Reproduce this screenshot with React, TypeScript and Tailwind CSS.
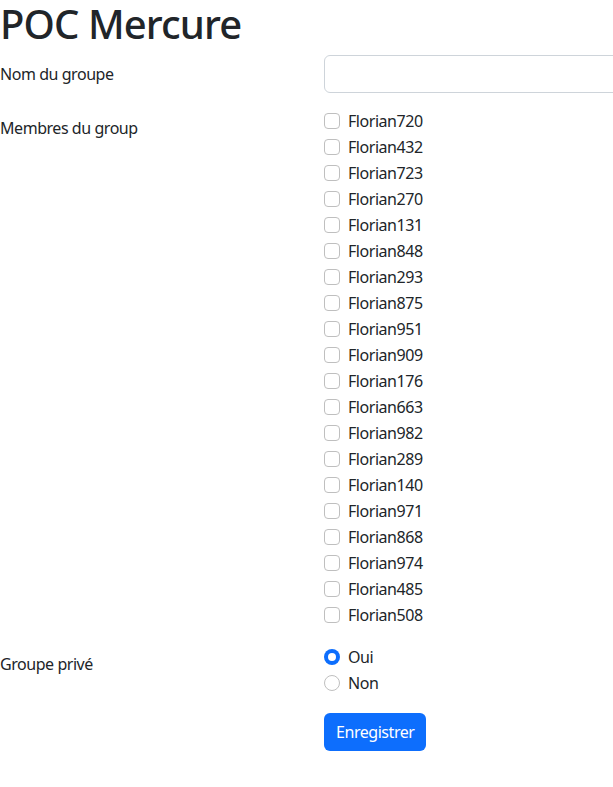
import React from "react";

const names = [
  "Florian720","Florian432","Florian723","Florian270","Florian131","Florian848","Florian293","Florian875","Florian951","Florian909",
  "Florian176","Florian663","Florian982","Florian289","Florian140","Florian971","Florian868","Florian974","Florian485","Florian508",
];

export default function App() {
  return (
    <div className="w-[613px] min-h-[787px] overflow-hidden bg-white text-[#212529] text-[16px] leading-6 tracking-[-0.45px]" style={{ fontFamily: '"Noto Sans", "Open Sans", sans-serif' }}>
      <h1 className="text-[40px] font-medium leading-[48px] mb-[7px] tracking-[-0.9px]">POC Mercure</h1>
      <div className="grid grid-cols-[324px_400px] mb-4">
        <label className="pt-[7px] pb-[7px]">Nom du groupe</label>
        <input className="h-[38px] border border-[#ced4da] rounded-[6px] px-3 outline-none" />
      </div>
      <div className="grid grid-cols-[324px_1fr] mb-4">
        <div className="pt-[7px]">Membres du group</div>
        <div className="flex flex-col">
          {names.map((n) => (
            <div key={n} className="flex items-start h-6 mb-[2px]">
              <span className="mt-1 w-4 h-4 border border-[#bfbfbf] rounded-[4px] bg-white shrink-0" />
              <span className="ml-2">{n}</span>
            </div>
          ))}
        </div>
      </div>
      <div className="grid grid-cols-[324px_1fr] mb-4">
        <div className="pt-[7px]">Groupe privé</div>
        <div className="flex flex-col">
          <div className="flex items-start h-6 mb-[2px]">
            <span className="mt-1 w-4 h-4 rounded-full bg-[#0d6efd] flex items-center justify-center shrink-0">
              <span className="w-2 h-2 rounded-full bg-white" />
            </span>
            <span className="ml-2">Oui</span>
          </div>
          <div className="flex items-start h-6 mb-[2px]">
            <span className="mt-1 w-4 h-4 border border-[#bfbfbf] rounded-full bg-white shrink-0" />
            <span className="ml-2">Non</span>
          </div>
        </div>
      </div>
      <div className="grid grid-cols-[324px_1fr]">
        <div />
        <div>
          <button className="bg-[#0d6efd] text-white rounded-[6px] px-3 py-[7px] leading-6 h-[38px]">Enregistrer</button>
        </div>
      </div>
    </div>
  );
}
